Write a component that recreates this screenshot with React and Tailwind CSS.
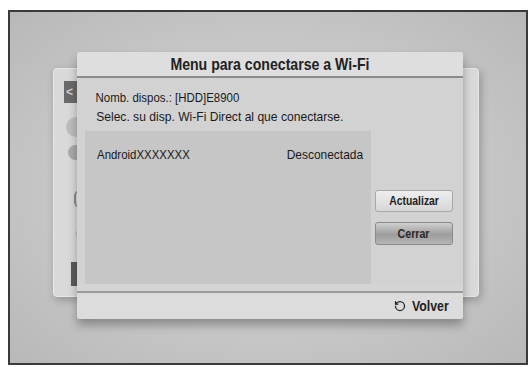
import { RotateCcw } from 'lucide-react';

const font = { fontFamily: '"Liberation Sans", Arial, sans-serif' };

const App = () => {
  return (
    <div className="w-[532px] h-[367px] bg-white pt-[10px] pl-[8px]" style={font}>
      <div className="relative w-[520px] h-[355px] border-2 border-[#3a3a3a] bg-[radial-gradient(ellipse_at_center,#d2d2d2_0%,#c6c6c6_60%,#b8b8b8_100%)] overflow-hidden">
        {/* BACK PANEL */}
        <div className="absolute left-[43px] top-[56px] w-[426px] h-[229px] rounded-sm bg-[#d9d9d9] border border-[#e8e8e8] shadow-[2px_3px_8px_rgba(0,0,0,0.25)]">
          <div className="flex flex-col items-end pr-[2px] w-[28px] pt-[12px]">
            <div className="w-[16px] h-[22px] bg-[#6a6a6a] text-[#cfcfcf] text-[12px] leading-[22px] pl-[2px] font-bold">&lt;</div>
            <div className="w-[14px] h-[20px] rounded-l-full bg-[#bdbdbd] mt-[14px]" />
            <div className="w-[12px] h-[15px] rounded-l-full bg-[#a9a9a9] mt-[8px]" />
            <div className="w-[6px] h-[18px] rounded-l-full border-l-2 border-[#8a8a8a] mt-[30px]" />
            <div className="w-[5px] h-[8px] rounded-l-full bg-[#c9c9c9] mt-[22px]" />
            <div className="w-[9px] h-[24px] bg-[#5c5c5c] mt-[24px]" />
          </div>
        </div>

        {/* DIALOG */}
        <div className="absolute left-[67px] top-[40px] w-[386px] h-[267px] rounded-[3px] bg-[#d4d4d4] flex flex-col shadow-[0_6px_10px_rgba(0,0,0,0.3)] overflow-hidden">
          <div className="h-[26px] bg-[#dedede] border-b-2 border-[#8c8c8c] flex items-center justify-center pt-[2px]">
            <span className="inline-block scale-x-[0.83] text-[17px] font-bold text-[#222] whitespace-nowrap">Menu para conectarse a Wi-Fi</span>
          </div>

          <div className="flex-1 flex flex-col pl-[8px] pr-[10px] pt-[10px] bg-[#d2d2d2]">
            <p className="origin-left scale-x-[0.88] text-[13px] leading-[19px] text-[#1a1a1a] pl-[12px] whitespace-nowrap">Nomb. dispos.: [HDD]E8900</p>
            <p className="origin-left scale-x-[0.93] text-[13px] leading-[19px] text-[#1a1a1a] pl-[12px] whitespace-nowrap">Selec. su disp. Wi-Fi Direct al que conectarse.</p>

            <div className="flex mt-[5px] gap-[4px]">
              <div className="w-[286px] h-[153px] bg-[#c6c6c6] pl-[12px] pr-[8px] pt-[14px]">
                <div className="flex justify-between text-[13px] text-[#1a1a1a]">
                  <span className="inline-block origin-left scale-x-[0.88]">AndroidXXXXXXX</span>
                  <span className="inline-block origin-right scale-x-[0.92]">Desconectada</span>
                </div>
              </div>

              <div className="flex flex-col gap-[10px] pt-[59px]">
                <button className="w-[78px] h-[22px] rounded-[3px] border border-[#a8a8a8] bg-[linear-gradient(#eeeeee,#d6d6d6)] text-[13px] font-bold text-[#222] flex items-center justify-center">
                  <span className="inline-block scale-x-[0.8]">Actualizar</span>
                </button>
                <button className="w-[78px] h-[23px] rounded-[3px] border border-[#8a8a8a] bg-[linear-gradient(#d0d0d0,#9c9c9c_55%,#b6b6b6)] text-[13px] font-bold text-[#2a2a2a] flex items-center justify-center">
                  <span className="inline-block scale-x-[0.82]">Cerrar</span>
                </button>
              </div>
            </div>
          </div>

          <div className="h-[28px] mt-[7px] border-t-2 border-[#9a9a9a] bg-[#dcdcdc] flex items-center justify-end pr-[14px]">
            <RotateCcw size={12} strokeWidth={2.5} className="text-[#222] mr-[-2px]" />
            <span className="inline-block origin-right scale-x-[0.82] text-[15px] font-bold text-[#222]">Volver</span>
          </div>
        </div>
      </div>
    </div>
  );
};

export default App;
